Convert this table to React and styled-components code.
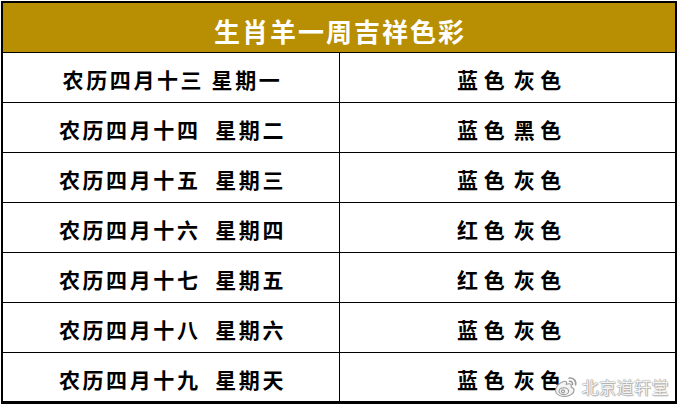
import React from "react";
import styled, { createGlobalStyle } from "styled-components";

const Global = createGlobalStyle`
  html, body { margin: 0; padding: 0; background: #ffffff; }
  body { font-family: "Noto Sans CJK SC", "Noto Sans", sans-serif; }
`;

const Frame = styled.div`
  position: relative;
  box-sizing: border-box;
  margin: 1px 0 0 1px;
  width: 676px;
  height: 403px;
  border: 2px solid #000;
  border-bottom-width: 3px;
  display: flex;
  flex-direction: column;
  overflow: hidden;
`;

const Header = styled.div`
  box-sizing: border-box;
  height: 50px;
  flex: none;
  background: #b88e02;
  border-bottom: 1px solid #000;
  color: #ffffff;
  font-size: 26px;
  font-weight: 700;
  letter-spacing: 2px;
  display: flex;
  align-items: center;
  justify-content: center;
  padding-top: 5px;
  padding-left: 2px;
`;

const Row = styled.div`
  box-sizing: border-box;
  display: grid;
  grid-template-columns: 337px 1fr;
  height: ${(p) => (p.$last ? "auto" : "50px")};
  flex: ${(p) => (p.$last ? "1" : "none")};
  border-bottom: ${(p) => (p.$last ? "none" : "1px solid #000")};
`;

const Cell = styled.div`
  box-sizing: border-box;
  display: flex;
  align-items: center;
  justify-content: center;
  color: #000;
  font-size: 21px;
  font-weight: 700;
  white-space: pre;
  padding-top: 3px;
  border-right: ${(p) => (p.$divider ? "1px solid #000" : "none")};
`;

const DateText = styled.span`
  letter-spacing: 2.6px;
  margin-left: 3px;
`;

const ColorText = styled.span`
  letter-spacing: 5.6px;
  word-spacing: -7px;
  margin-left: 9px;
`;

const Watermark = styled.div`
  position: absolute;
  right: 6px;
  bottom: 2px;
  display: flex;
  align-items: center;
  gap: 3px;
  pointer-events: none;
`;

const MarkText = styled.span`
  font-family: "Noto Sans CJK SC", sans-serif;
  font-size: 17px;
  font-weight: 400;
  color: rgba(255, 255, 255, 0.92);
  letter-spacing: 0.5px;
  text-shadow: 0 0 1px #8a8a8a, 0 0 1px #8a8a8a, 1px 1px 1px rgba(0,0,0,0.25);
`;

const WeiboLogo = () => (
  <svg width="26" height="24" viewBox="0 0 26 24">
    <g fill="#f4f4f4" stroke="#9a9a9a" strokeWidth="1.1">
      <path d="M10.5 6.5c-3.6 1.2-8 5-8 9 0 3.6 4.3 6 8.8 6 5.4 0 9.8-3 9.8-6.3 0-2-1.8-2.9-3-3.3.5-1.5.4-3-1.7-3.2-1.2-.1-2.700.5-3 .6.6-1.6.6-3.6-2.9-2.8z" />
      <ellipse cx="10.8" cy="16.2" rx="4.8" ry="3.4" />
      <circle cx="10" cy="16.4" r="1.5" />
    </g>
    <g fill="none" stroke="#9a9a9a" strokeWidth="1.6" strokeLinecap="round">
      <path d="M16 3.2c4-.8 7.5 2.5 6.6 6.6" />
      <path d="M16.5 6.3c1.9-.3 3.4 1.2 3 3.1" />
    </g>
  </svg>
);

const rows = [
  { date: "农历四月十三 星期一", color: "蓝色 灰色" },
  { date: "农历四月十四  星期二", color: "蓝色 黑色" },
  { date: "农历四月十五  星期三", color: "蓝色 灰色" },
  { date: "农历四月十六  星期四", color: "红色 灰色" },
  { date: "农历四月十七  星期五", color: "红色 灰色" },
  { date: "农历四月十八  星期六", color: "蓝色 灰色" },
  { date: "农历四月十九  星期天", color: "蓝色 灰色" },
];

export default function App() {
  return (
    <>
      <Global />
      <Frame>
        <Header>生肖羊一周吉祥色彩</Header>
        {rows.map((r, i) => (
          <Row key={i} $last={i === rows.length - 1}>
            <Cell $divider>
              <DateText>{r.date}</DateText>
            </Cell>
            <Cell>
              <ColorText>{r.color}</ColorText>
            </Cell>
          </Row>
        ))}
        <Watermark>
          <WeiboLogo />
          <MarkText>北京道轩堂</MarkText>
        </Watermark>
      </Frame>
    </>
  );
}
